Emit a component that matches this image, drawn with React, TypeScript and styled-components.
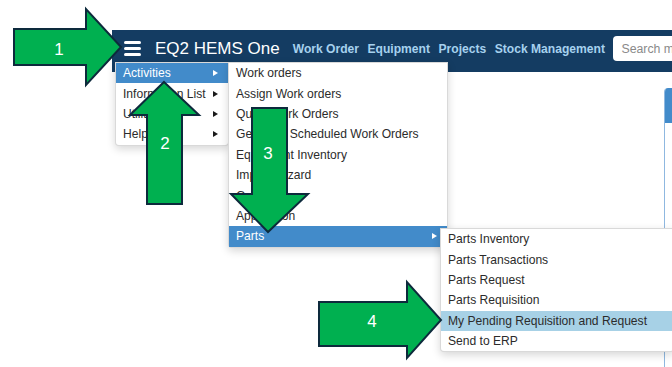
import React from 'react'
import styled, { createGlobalStyle } from 'styled-components'

const GlobalStyle = createGlobalStyle`
	html, body {
		margin: 0;
		padding: 0;
		background: #ffffff;
		overflow: hidden;
	}
	body {
		font-family: "Liberation Sans", Arial, sans-serif;
	}
`

const Page = styled.div`
	position: relative;
	width: 672px;
	height: 367px;
	overflow: hidden;
	padding: 30px 0 0 112px;
	box-sizing: border-box;
`

const Navbar = styled.div`
	position: relative;
	display: flex;
	align-items: center;
	height: 42px;
	box-sizing: border-box;
	padding: 6px 0 11px 12px;
	background: #143c62;
	white-space: nowrap;

	& > * {
		flex: none;
	}
`

const Burger = styled.div`
	display: flex;
	flex-direction: column;
	justify-content: space-between;
	width: 17px;
	height: 15px;
	margin-right: 14px;

	span {
		display: block;
		width: 17px;
		height: 3px;
		border-radius: 1.5px;
		background: #ffffff;
	}
`

const Brand = styled.div`
	font-size: 17px;
	color: #ffffff;
	margin-right: 13px;
`

const NavLink = styled.a`
	font-size: 12.1px;
	font-weight: bold;
	color: #a6d1ee;
	margin-right: 8.5px;
	text-decoration: none;
`

const Search = styled.div`
	display: flex;
	align-items: center;
	height: 25px;
	width: 120px;
	box-sizing: border-box;
	padding-left: 8px;
	background: #ffffff;
	border-radius: 4px;
	font-size: 12.3px;
	color: #8a8a8a;
`

interface MenuProps {
	$left: number;
	$top: number;
	$width: number;
}

const Menu = styled.ul`
	position: absolute;
	left: ${({$left}: MenuProps): string => $left+'px'};
	top: ${({$top}: MenuProps): string => $top+'px'};
	width: ${({$width}: MenuProps): string => $width+'px'};
	margin: 0;
	padding: 0;
	list-style: none;
	background: #ffffff;
	border: 1px solid rgba(0,0,0,.15);
	border-radius: 0 0 4px 4px;
	box-shadow: 0 3px 8px rgba(0,0,0,.16);
	box-sizing: border-box;
	z-index: 5;
`

type Tone = 'none' | 'primary' | 'soft'

const Item = styled.li<{ $tone: Tone }>`
	position: relative;
	display: flex;
	align-items: center;
	justify-content: space-between;
	height: 20.4px;
	padding: 0 10px 0 7px;
	font-size: 12.1px;
	color: ${({$tone}) => $tone === 'primary' ? '#ffffff' : '#2b2b2b'};
	background: ${({$tone}) => $tone === 'primary' ? '#428bca' : ($tone === 'soft' ? '#a7d1e6' : 'transparent')};
	white-space: nowrap;
`

const Caret = styled.span<{ $light?: boolean }>`
	width: 0;
	height: 0;
	border-top: 3.5px solid transparent;
	border-bottom: 3.5px solid transparent;
	border-left: 5px solid ${({$light}) => $light ? '#ffffff' : '#1a1a1a'};
`

const Content = styled.div`
	display: flex;
	padding: 16px 0 0 552px;
`

const Panel = styled.div`
	flex: none;
	width: 200px;
	height: 300px;
	border: 1px solid #8fb8e0;
	border-top: none;
	border-radius: 4px 0 0 0;
	overflow: hidden;
`

const PanelHead = styled.div`
	height: 35px;
	background: #428bca;
`

const Overlay = styled.svg`
	position: absolute;
	left: 0;
	top: 0;
	z-index: 10;
	pointer-events: none;
`

const Label = styled.text`
	font-family: "Liberation Sans", Arial, sans-serif;
	font-size: 17px;
	fill: #ffffff;
`

interface Entry {
	label: string;
	tone?: Tone;
	sub?: boolean;
}

const mainMenu: Entry[] = [
	{ label: 'Activities', tone: 'primary', sub: true },
	{ label: 'Information List', sub: true },
	{ label: 'Utilities', sub: true },
	{ label: 'Help', sub: true },
]

const activities: Entry[] = [
	{ label: 'Work orders' },
	{ label: 'Assign Work orders' },
	{ label: 'Quick Work Orders' },
	{ label: 'Generate Scheduled Work Orders' },
	{ label: 'Equipment Inventory' },
	{ label: 'Import Wizard' },
	{ label: 'Gauges' },
	{ label: 'Application' },
	{ label: 'Parts', tone: 'primary', sub: true },
]

const parts: Entry[] = [
	{ label: 'Parts Inventory' },
	{ label: 'Parts Transactions' },
	{ label: 'Parts Request' },
	{ label: 'Parts Requisition' },
	{ label: 'My Pending Requisition and Request', tone: 'soft' },
	{ label: 'Send to ERP' },
]

const MenuList = ({ items, left, top, width }: { items: Entry[]; left: number; top: number; width: number }) => (
	<Menu $left={left} $top={top} $width={width}>
		{items.map((it) => (
			<Item key={it.label} $tone={it.tone || 'none'}>
				<span>{it.label}</span>
				{it.sub && <Caret $light={it.tone === 'primary'} />}
			</Item>
		))}
	</Menu>
)

const arrowStyle = { fill: '#00b050', stroke: '#0d2a3c', strokeWidth: 2, strokeLinejoin: 'miter' as const }

export default function App() {
	return (
		<>
			<GlobalStyle />
			<Page>
				<Navbar>
					<Burger><span /><span /><span /></Burger>
					<Brand>EQ2 HEMS One</Brand>
					<NavLink>Work Order</NavLink>
					<NavLink>Equipment</NavLink>
					<NavLink>Projects</NavLink>
					<NavLink>Stock Management</NavLink>
					<Search>Search menu</Search>
					<MenuList items={mainMenu} left={3} top={32} width={114} />
					<MenuList items={activities} left={116} top={32} width={220} />
					<MenuList items={parts} left={328} top={198} width={234} />
				</Navbar>
				<Content>
					<Panel><PanelHead /></Panel>
				</Content>
				<Overlay width="672" height="367" viewBox="0 0 672 367">
					<polygon points="14,29 86,29 86,9 121,47 86,85 86,65 14,65" {...arrowStyle} />
					<Label x="59" y="55" textAnchor="middle">1</Label>
					<polygon points="164,82 199,115 182,115 182,204 147,204 147,115 130,115" {...arrowStyle} />
					<Label x="165" y="149" textAnchor="middle">2</Label>
					<polygon points="252,108 287,108 287,194 308,194 268,232 231,194 252,194" {...arrowStyle} />
					<Label x="268" y="159" textAnchor="middle">3</Label>
					<polygon points="319,302 407,302 407,282 441,320 407,358 407,346 319,346" {...arrowStyle} />
					<Label x="372" y="327" textAnchor="middle">4</Label>
				</Overlay>
			</Page>
		</>
	)
}
